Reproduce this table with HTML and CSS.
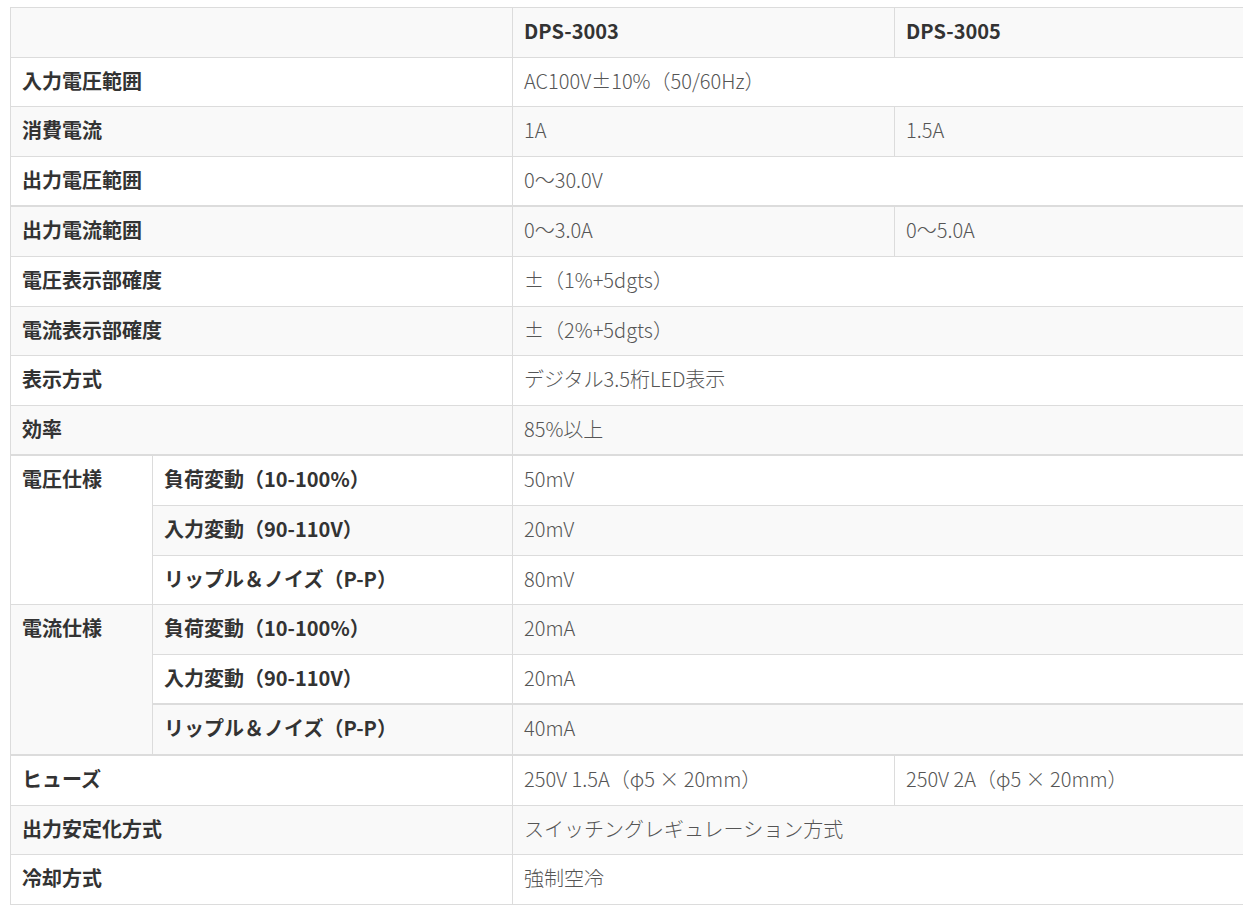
FILE: index.html
```html
<!DOCTYPE html>
<html lang="ja">
<head>
<meta charset="utf-8">
<title>仕様</title>
<link rel="stylesheet" href="styles.css">
</head>
<body>
<table class="spec">
  <colgroup>
    <col class="c-sub1">
    <col class="c-sub2">
    <col class="c-val">
    <col class="c-val">
  </colgroup>
  <thead>
    <tr>
      <th colspan="2"></th>
      <th>DPS-3003</th>
      <th>DPS-3005</th>
    </tr>
  </thead>
  <tbody>
    <tr><th colspan="2">入力電圧範囲</th><td colspan="2">AC100V±10%（50/60Hz）</td></tr>
    <tr><th colspan="2">消費電流</th><td>1A</td><td>1.5A</td></tr>
    <tr><th colspan="2">出力電圧範囲</th><td colspan="2">0～30.0V</td></tr>
    <tr class="sep"><th colspan="2">出力電流範囲</th><td>0～3.0A</td><td>0～5.0A</td></tr>
    <tr><th colspan="2">電圧表示部確度</th><td colspan="2">±（1%+5dgts）</td></tr>
    <tr><th colspan="2">電流表示部確度</th><td colspan="2">±（2%+5dgts）</td></tr>
    <tr><th colspan="2">表示方式</th><td colspan="2">デジタル3.5桁LED表示</td></tr>
    <tr><th colspan="2">効率</th><td colspan="2">85%以上</td></tr>
    <tr class="sep"><th rowspan="3">電圧仕様</th><th>負荷変動（10-100%）</th><td colspan="2">50mV</td></tr>
    <tr><th>入力変動（90-110V）</th><td colspan="2">20mV</td></tr>
    <tr><th>リップル＆ノイズ（P-P）</th><td colspan="2">80mV</td></tr>
    <tr><th rowspan="3">電流仕様</th><th>負荷変動（10-100%）</th><td colspan="2">20mA</td></tr>
    <tr><th>入力変動（90-110V）</th><td colspan="2">20mA</td></tr>
    <tr class="sep"><th>リップル＆ノイズ（P-P）</th><td colspan="2">40mA</td></tr>
    <tr class="sep"><th colspan="2">ヒューズ</th><td>250V 1.5A（φ5 × 20mm）</td><td>250V 2A（φ5 × 20mm）</td></tr>
    <tr><th colspan="2">出力安定化方式</th><td colspan="2">スイッチングレギュレーション方式</td></tr>
    <tr><th colspan="2">冷却方式</th><td colspan="2">強制空冷</td></tr>
  </tbody>
</table>
</body>
</html>
```

FILE: styles.css
```css
html, body {
  overflow: hidden;
}
body {
  margin: 7px 0 0 10px;
  background: #fff;
  font-family: "Noto Sans CJK JP", "Noto Sans", sans-serif;
  color: #333;
}
.spec {
  border-collapse: collapse;
  table-layout: fixed;
  width: 1266px;
  font-size: 20px;
  line-height: 24.6px;
}
.c-sub1 { width: 142px; }
.c-sub2 { width: 360px; }
.c-val { width: 382px; }
.spec th,
.spec td {
  border: 1px solid #dcdcdc;
  padding: 11px 11px 13px;
  text-align: left;
  vertical-align: top;
}
.spec th {
  font-weight: 700;
  color: #333;
}
.spec td {
  font-weight: 300;
  color: #555;
}
.spec thead tr { background: #f9f9f9; }
.spec tbody tr:nth-child(odd) { background: #fff; }
.spec tbody tr:nth-child(even) { background: #f9f9f9; }
.spec tr.sep > * {
  border-top-width: 2px;
}
```
